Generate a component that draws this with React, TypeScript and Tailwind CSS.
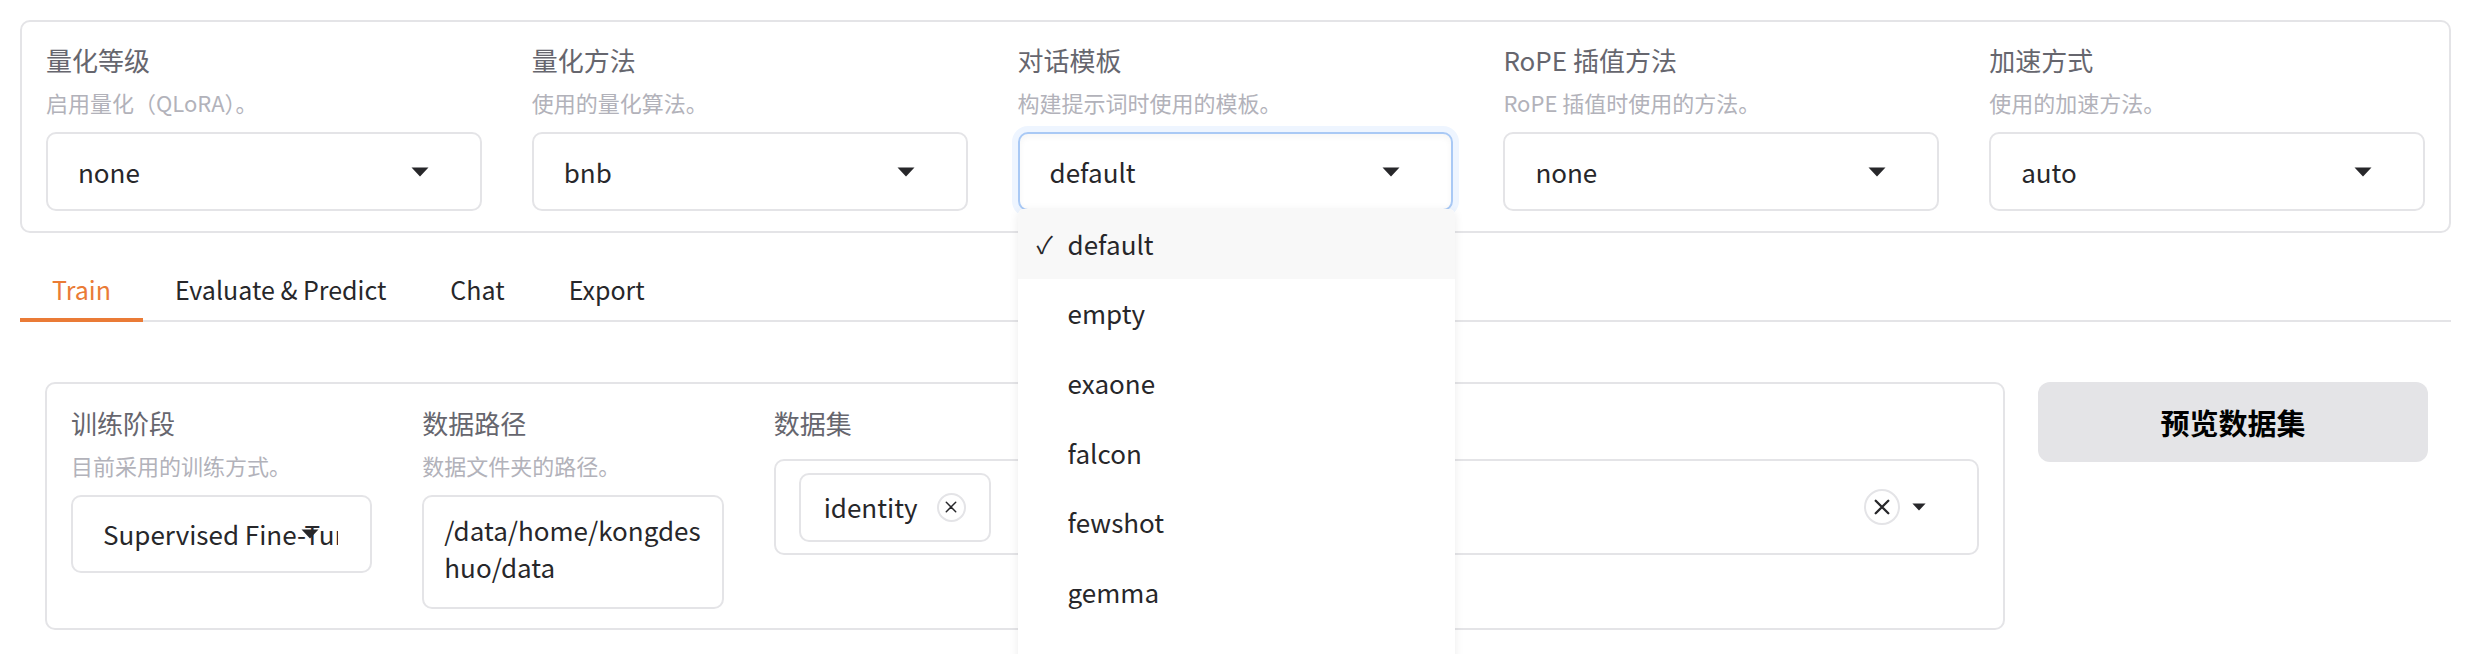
import React from "react";

const FONT = '"Noto Sans CJK SC", "Noto Sans", sans-serif';

function Arrow({ w = 18, h = 10 }: { w?: number; h?: number }) {
  return (
    <svg width={w} height={h} viewBox="0 0 18 10" className="block">
      <path d="M0.5 0.5 H17.5 L9 9.5 Z" fill="#27272a" />
    </svg>
  );
}

function XIcon({ size = 14, stroke = 2 }: { size?: number; stroke?: number }) {
  return (
    <svg width={size} height={size} viewBox="0 0 14 14" className="block">
      <path d="M1.5 1.5 L12.5 12.5 M12.5 1.5 L1.5 12.5" stroke="#27272a" strokeWidth={stroke} strokeLinecap="round" />
    </svg>
  );
}

function Label({ title, info }: { title: string; info?: string }) {
  return (
    <>
      <div className="text-[26px] leading-[34px] text-[#66666e] whitespace-nowrap">{title}</div>
      {info && <div className="mt-[10px] text-[22px] leading-[30px] text-[#b2b2ba] whitespace-nowrap">{info}</div>}
    </>
  );
}

function Select({ value, focused, h = 79, children }: { value: string; focused?: boolean; h?: number; children?: React.ReactNode }) {
  return (
    <div
      className={
        "relative rounded-[10px] border-2 bg-white " +
        (focused
          ? "border-[#a9c9f5] ring-[6px] ring-[#eef5ff] shadow-[inset_0_3px_6px_rgba(0,0,0,0.04)]"
          : "border-[#e4e4e7]")
      }
      style={{ height: h }}
    >
      <div className="flex h-full items-center pl-[30px] pr-[32px] text-[26px] text-[#27272a]">
        <span className="min-w-0 flex-1 overflow-hidden whitespace-nowrap leading-[42px]">{value}</span>
      </div>
      <div className="absolute right-[51px] top-1/2 -translate-y-1/2">
        <Arrow />
      </div>
      {children}
    </div>
  );
}

const menuItems = ["default", "empty", "exaone", "falcon", "fewshot", "gemma"];

function Menu() {
  return (
    <div className="absolute left-[-2px] right-[-4px] top-[100%] z-20 h-[520px] overflow-hidden rounded-t-[6px] bg-white shadow-[0_2px_10px_rgba(0,0,0,0.08)]">
      {menuItems.map((it, i) => (
        <div
          key={it}
          className={"flex h-[69.6px] items-center pl-[19px] text-[26px] leading-[34px] text-[#27272a] " + (i === 0 ? "bg-[#f8f8f8]" : "")}
        >
          <span className="w-[31px] text-[24px]">{i === 0 ? "✓" : ""}</span>
          <span>{it}</span>
        </div>
      ))}
    </div>
  );
}

export default function App() {
  const top = [
    { t: "量化等级", i: "启用量化（QLoRA）。", v: "none" },
    { t: "量化方法", i: "使用的量化算法。", v: "bnb" },
    { t: "对话模板", i: "构建提示词时使用的模板。", v: "default", f: true },
    { t: "RoPE 插值方法", i: "RoPE 插值时使用的方法。", v: "none" },
    { t: "加速方式", i: "使用的加速方法。", v: "auto" },
  ];
  const tabs = ["Train", "Evaluate & Predict", "Chat", "Export"];
  return (
    <div className="relative h-[654px] w-[2480px] overflow-hidden bg-white" style={{ fontFamily: FONT }}>
      <div className="ml-[20px] w-[2431px] pt-[20px]">
        {/* top settings panel */}
        <div className="grid grid-cols-5 gap-x-[50px] rounded-[10px] border-2 border-[#e4e4e7] px-[24px] pb-[20px] pt-[21px]">
          {top.map((c) => (
            <div key={c.t} className="min-w-0">
              <Label title={c.t} info={c.i} />
              <div className="mt-[15px]">
                <Select value={c.v} focused={c.f}>
                  {c.f && <Menu />}
                </Select>
              </div>
            </div>
          ))}
        </div>

        {/* tabs */}
        <div className="mt-[27px] flex border-b-2 border-[#e4e4e7]">
          {tabs.map((t, i) => (
            <div
              key={t}
              className={
                "-mb-[2px] border-b-4 px-[32px] pb-[12px] pt-[12px] text-[25px] leading-[34px] whitespace-nowrap " +
                (i === 0 ? "border-[#ea7b36] text-[#ea7b36]" : "border-transparent text-[#27272a]")
              }
            >
              {t}
            </div>
          ))}
        </div>

        {/* train content */}
        <div className="flex items-start gap-[33px] pl-[25px] pr-[23px] pt-[60px]">
          <div className="grid flex-1 grid-cols-[1fr_1fr_4fr] items-start gap-x-[50px] rounded-[10px] border-2 border-[#e4e4e7] px-[24px] pb-[19px] pt-[22px]">
            <div className="min-w-0">
              <Label title="训练阶段" info="目前采用的训练方式。" />
              <div className="mt-[15px]">
                <Select value="Supervised Fine-Tuning" h={78} />
              </div>
            </div>
            <div className="min-w-0">
              <Label title="数据路径" info="数据文件夹的路径。" />
              <div className="mt-[15px] h-[114px] rounded-[10px] border-2 border-[#e4e4e7] pl-[20px] pr-[16px] pt-[14px] text-[26px] leading-[37px] text-[#27272a]">
                /data/home/kongdes
                <br />
                huo/data
              </div>
            </div>
            <div className="min-w-0">
              <Label title="数据集" />
              <div className="mt-[19px] flex h-[96px] items-center rounded-[10px] border-2 border-[#e4e4e7] pl-[23px] pr-[51px]">
                <div className="flex h-[69px] items-center gap-[19px] rounded-[10px] border-2 border-[#e4e4e7] pl-[23px] pr-[23px] text-[26px] leading-[34px] text-[#27272a]">
                  <span>identity</span>
                  <span className="flex h-[29px] w-[29px] items-center justify-center rounded-full border-2 border-[#e4e4e7]">
                    <XIcon size={12} stroke={1.7} />
                  </span>
                </div>
                <div className="flex-1" />
                <span className="flex h-[36px] w-[36px] items-center justify-center rounded-full border-2 border-[#e4e4e7]">
                  <XIcon size={16} stroke={2} />
                </span>
                <span className="ml-[12px]">
                  <Arrow w={14} h={8} />
                </span>
              </div>
            </div>
          </div>
          <div className="flex h-[80px] w-[390px] items-center justify-center rounded-[12px] bg-[#e4e4e7] text-[29px] font-bold leading-[40px] text-black">
            预览数据集
          </div>
        </div>
      </div>
    </div>
  );
}
